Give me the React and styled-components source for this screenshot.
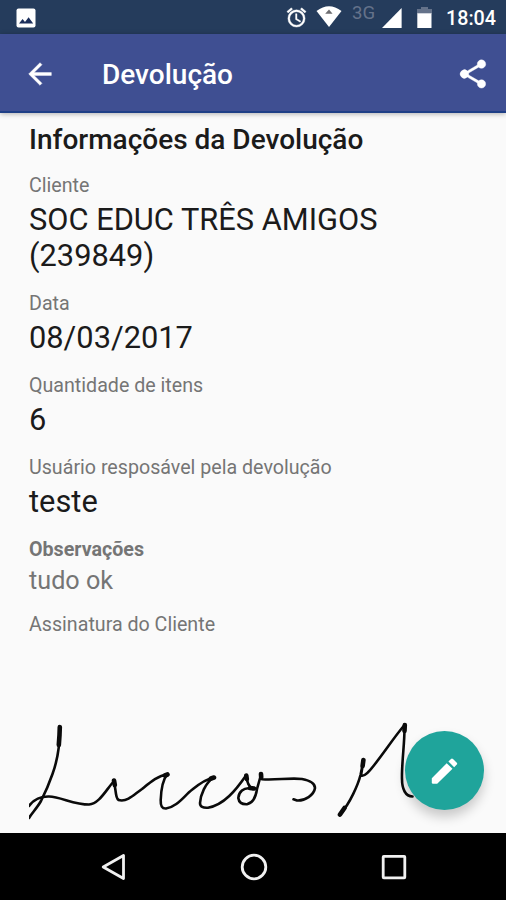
import React from 'react';
import styled, { createGlobalStyle } from 'styled-components';

const App = () => {
  return (
    <>
      <GlobalStyle />
      <Screen>
        <StatusBar>
          <PictureIcon />
          <StatusIcons />
          <Clock>18:04</Clock>
        </StatusBar>

        <AppBar>
          <IconButton aria-label='Voltar'>
            <BackIcon />
          </IconButton>
          <Title>Devolução</Title>
          <IconButton aria-label='Compartilhar'>
            <ShareIcon />
          </IconButton>
        </AppBar>

        <Content>
          <Heading>Informações da Devolução</Heading>
          <Field label='Cliente'>
            SOC EDUC TRÊS AMIGOS
            <br />
            (239849)
          </Field>
          <Field label='Data'>08/03/2017</Field>
          <Field label='Quantidade de itens'>6</Field>
          <Field label='Usuário resposável pela devolução'>teste</Field>
          <FieldWrapper>
            <Label $bold>Observações</Label>
            <Note>tudo ok</Note>
          </FieldWrapper>
          <Label>Assinatura do Cliente</Label>
          <Signature />
          <EditButton aria-label='Editar'>
            <svg width='28' height='28' viewBox='0 0 28 28' fill='#fff'>
              <path d='M0.8 26V21.200L15.700 6.200L21.500 11.800L6.200 26.800H1.600zM17.400 4.500L20 1.900Q21 1.100 22 2L25.800 5.800Q26.600 6.700 25.800 7.600L23.200 10.200z' />
            </svg>
          </EditButton>
        </Content>

        <NavBar>
          <svg width='28' height='30' viewBox='0 0 28 30'>
            <path d='M23.5 3.5v23L3.2 15z' />
          </svg>
          <svg width='30' height='30' viewBox='0 0 30 30'>
            <circle cx='15' cy='15' r='11.8' />
          </svg>
          <svg width='28' height='30' viewBox='0 0 28 30'>
            <rect x='3.2' y='4.3' width='21.6' height='21.6' rx='0.6' />
          </svg>
        </NavBar>
      </Screen>
    </>
  );
};

export default App;

const Field = ({ label, children }) => (
  <FieldWrapper>
    <Label>{label}</Label>
    <Value>{children}</Value>
  </FieldWrapper>
);

const PictureIcon = () => (
  <svg width='20' height='20' viewBox='0 0 20 20'>
    <rect x='0.5' y='0.5' width='19' height='19' rx='2' fill='#fff' />
    <path d='M3 15.5l3.6-4.6 2.4 3 3.6-4.6 4.6 6.2z' fill='#1c2f5c' />
  </svg>
);

const StatusIcons = () => (
  <StatusGroup>
    <AlarmIcon viewBox='0 0 24 24'>
      <path d='M22 5.72l-4.6-3.86-1.29 1.53 4.6 3.86L22 5.72zM7.88 3.39L6.6 1.86 2 5.71l1.29 1.53 4.59-3.85zM12.5 8H11v6l4.75 2.85.75-1.23-4-2.37V8zM12 4a9 9 0 1 0 0 18 9 9 0 0 0 0-18zm0 16a7 7 0 1 1 0-14 7 7 0 0 1 0 14z' />
    </AlarmIcon>
    <svg width='26' height='24' viewBox='0 0 26 24'>
      <path d='M0.5 5Q13-4.4 25.500 5L13 21z' fill='#fff' />
      <path d='M9.2 7.8h7.4L13 3.6z' fill='#6d6d70' />
    </svg>
    <Network>3G</Network>
    <svg width='20' height='20' viewBox='0 0 20 20'>
      <path d='M19.6 0v20H0z' fill='#fff' />
    </svg>
    <svg width='15' height='21' viewBox='0 0 15 21'>
      <path d='M4 0h7v2h4v5H0V2h4z' fill='#64728a' />
      <path d='M0.3 6.3h14.2V21H0.3z' fill='#fff' />
    </svg>
  </StatusGroup>
);

const BackIcon = () => (
  <svg width='34' height='34' viewBox='0 0 24 24' fill='#fff' stroke='#fff' strokeWidth='0.3'>
    <path d='M20 11H7.83l5.59-5.59L12 4l-8 8 8 8 1.41-1.41L7.83 13H20v-2z' />
  </svg>
);

const ShareIcon = () => (
  <svg width='34' height='34' viewBox='0 0 24 24' fill='#fff' stroke='#fff' strokeWidth='0.3'>
    <path d='M18 16.08c-.76 0-1.44.3-1.96.77L8.91 12.7c.05-.23.09-.46.09-.7s-.04-.47-.09-.7l7.05-4.11A2.99 2.99 0 1 0 15 5c0 .24.04.47.09.7L8.04 9.81A3 3 0 1 0 8.04 14.19l7.12 4.16c-.05.21-.08.43-.08.65a2.92 2.92 0 1 0 2.92-2.92z' />
  </svg>
);

const Signature = () => (
  <SignatureDrawing viewBox='29 720 400 104'>
    {/* L */}
    <path d='M59.7 727.5C60 745 56.500 763 52.500 774C48 787 44 795 41 801C37 808 32 813 29 818' />
    <path d='M59.800 727L59.500 735L58.800 745' strokeWidth='4.600' />
    <path d='M29 806C34 799 40 796.300 49 796.500C61 797 74 804.500 89 804.500C99 804 106 790 114 781' />
    {/* ucc */}
    <path d='M114 780.500L116 794Q117 800.500 120 800.300C128 801.500 134 794.500 142 789C150 782.500 158 775.500 167 774.500C162 781 161 792 160.700 800C160.500 806 162 808.700 166 808.500C177 807 184 796 192 789.800C199 784 206 779 214 777.500C205 783 200.500 795 200 803C200 807 203 808 208 807.700C224 805 236 790 246 775.500' />
    {/* os */}
    <path d='M246.500 775.500Q247 786 253 789C243 786 238.500 793 238.300 798C239 803 242 804.500 247 804.300C253 803 256 796 257 789L261.200 774L262 779.300C276 780.500 289 777.500 302 779C310 780.500 315 784 315 788C314 795 305 801 297 800.500L293.500 799.300' />
    {/* M */}
    <path d='M340.500 814C350 803 358 785 360.500 775L363.400 761L361 775.500C365 777.500 371 769 375 764C386 750 395 736 404.500 725C405 741 401.500 763 402 779C402 789 405.500 796.500 412.500 796.500' />
    <path d='M340 814.500L344.500 808M363.400 760L362.600 766M404.800 725L404.500 731M250 788L254 788.500M114 780.500L114.800 785M165 775.500L167.500 774.500M211 778.500L214 777.500M246.300 775.500L246.800 779M261 774L261.200 777' strokeWidth='4.600' />
  </SignatureDrawing>
);

const GlobalStyle = createGlobalStyle`
  * {
    box-sizing: border-box;
  }
  body {
    margin: 0;
    font-family: Roboto, 'Noto Sans', sans-serif;
  }
  h1, h2, p {
    margin: 0;
  }
`;

const Screen = styled.div`
  display: flex;
  flex-direction: column;
  width: 506px;
  height: 900px;
  overflow: hidden;
  background: #fafafa;
`;

const StatusBar = styled.div`
  display: flex;
  align-items: center;
  flex: 0 0 34px;
  padding: 1px 10px 0 16px;
  background: #253c5c;
  color: #fff;
`;

const StatusGroup = styled.div`
  display: flex;
  align-items: center;
  margin-left: auto;
`;

const AlarmIcon = styled.svg`
  width: 23px;
  height: 23px;
  margin-right: 8px;
  fill: #fff;
  stroke: #fff;
  stroke-width: 0.4px;
`;

const Network = styled.span`
  width: 24px;
  margin: -9px 6px 0 10px;
  font-size: 18.6px;
  line-height: 20px;
  color: #64728a;

  & + svg {
    margin-right: 15px;
  }
`;

const Clock = styled.span`
  width: 50px;
  margin-left: 14px;
  padding-top: 1px;
  font-size: 19.7px;
  font-weight: 500;
  white-space: nowrap;
`;

const AppBar = styled.header`
  position: relative;
  display: flex;
  align-items: center;
  flex: 0 0 79px;
  padding: 2px 16px 0 23px;
  border-bottom: 2px solid #1f3f86;
  background: #3f4f92;
  color: #fff;
  box-shadow: 0 1px 5px rgba(0, 0, 0, 0.3);
`;

const IconButton = styled.button`
  display: flex;
  padding: 0;
  border: 0;
  background: none;
`;

const Title = styled.h1`
  flex: 1;
  margin-left: 45px;
  padding-top: 2px;
  font-size: 28px;
  font-weight: 500;
`;

const Content = styled.main`
  position: relative;
  flex: 1;
  padding: 10px 28px 0 29px;
`;

const Heading = styled.h2`
  margin-bottom: 12px;
  font-size: 28px;
  font-weight: 500;
  line-height: 34px;
  color: #1b1b1b;
`;

const FieldWrapper = styled.div`
  margin-bottom: 12px;
`;

const Label = styled.p`
  font-size: 19.65px;
  font-weight: ${({ $bold }) => ($bold ? 700 : 400)};
  line-height: 34px;
  color: #757575;
`;

const Value = styled.p`
  margin-top: -1px;
  padding-bottom: 1px;
  font-size: 30.8px;
  line-height: 36px;
  color: #1b1b1b;
`;

const Note = styled.p`
  padding-bottom: 1px;
  font-size: 25.2px;
  line-height: 28px;
  color: #757575;
`;

const SignatureDrawing = styled.svg`
  display: block;
  width: 400px;
  height: 104px;
  margin-top: 78px;
  fill: none;
  stroke: #0a0a0a;
  stroke-width: 2.6px;
  stroke-linecap: round;
  stroke-linejoin: round;
`;

const EditButton = styled.button`
  position: absolute;
  right: 22px;
  bottom: 23px;
  display: flex;
  align-items: center;
  justify-content: center;
  width: 79px;
  height: 79px;
  padding: 0;
  border: 0;
  border-radius: 50%;
  background: #1fa49b;
  box-shadow: 0 7px 12px rgba(0, 0, 0, 0.2);
`;

const NavBar = styled.nav`
  position: relative;
  display: flex;
  align-items: center;
  justify-content: space-between;
  flex: 0 0 67px;
  padding: 0 98px 0 100px;
  background: #000;

  svg {
    fill: none;
    stroke: #f1f1f1;
    stroke-width: 2.8px;
    stroke-linejoin: round;
  }
`;
